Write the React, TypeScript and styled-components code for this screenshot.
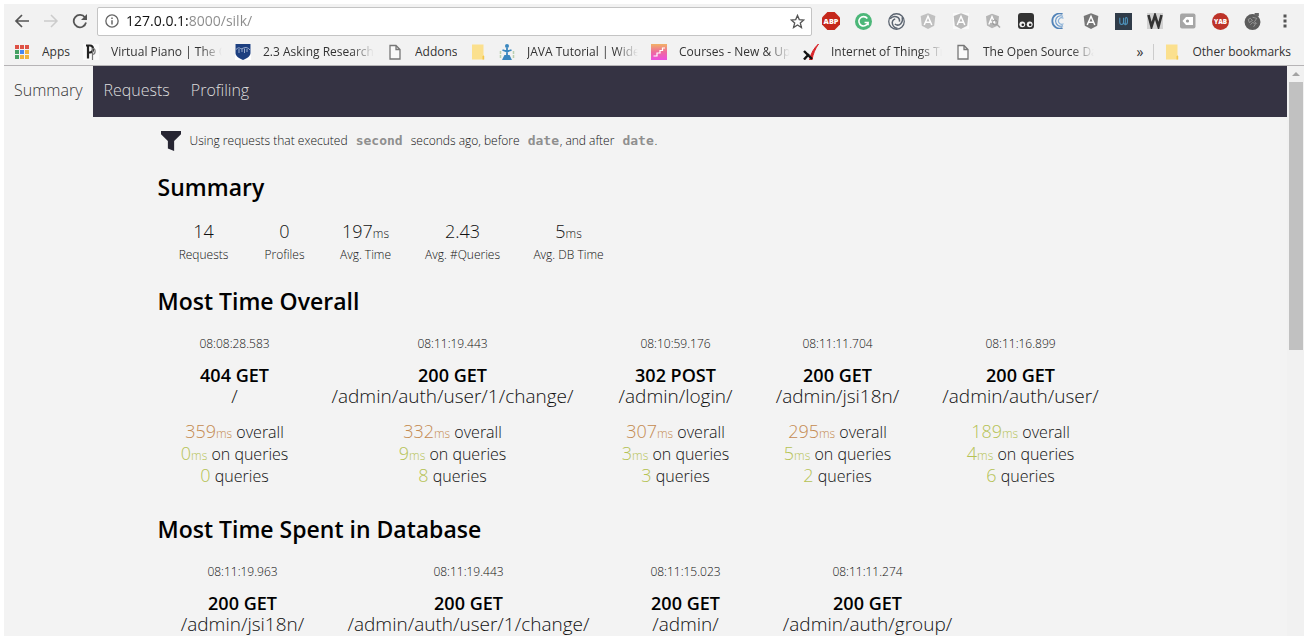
import React from 'react';
import styled, { createGlobalStyle, css } from 'styled-components';

const GlobalStyle = createGlobalStyle`
  * { box-sizing: border-box; }
  body { margin: 0; background: #fff; }
  button, input { font: inherit; color: inherit; }
`;

const uiFont = css`font-family: 'Open Sans', 'Noto Sans', sans-serif;`;

const Frame = styled.div`
  height: 100vh;
  padding: 4px 8px 8px 4px;
  display: flex;
  flex-direction: column;
  background: #fff;
`;

/* Browser chrome */
const Chrome = styled.header`
  ${uiFont}
  background: #f2f2f2;
  border-bottom: 1px solid #b6b4b6;
  color: #333;
`;
const Toolbar = styled.div`
  display: flex;
  align-items: center;
  height: 34px;
  padding: 0 3px 0 4px;
`;
const IconButton = styled.button<{ $w?: number }>`
  width: ${p => (p.$w ? `${p.$w}px` : 'auto')};
  height: 28px;
  flex: none;
  padding: 0;
  border: 0;
  background: none;
  display: flex;
  align-items: center;
  justify-content: center;
`;
const Omnibox = styled.div`
  flex: 1;
  min-width: 0;
  height: 29px;
  margin: 0 3px 0 3px;
  padding: 0 6px 0 7px;
  display: flex;
  align-items: center;
  gap: 7px;
  background: #fff;
  border: 1px solid #c4c4c4;
  border-radius: 2px;
`;
const Address = styled.input`
  flex: 1;
  min-width: 0;
  border: 0;
  padding: 0;
  outline: 0;
  font-size: 14px;
  line-height: 20px;
  color: transparent;
  background: linear-gradient(90deg, #111 62px, #8a8a8a 62px);
  background-clip: text;
  -webkit-background-clip: text;
`;
const Extensions = styled.div`
  flex: 0 0 454px;
  display: grid;
  grid-template-columns: repeat(14, 1fr);
  justify-items: center;
`;
const BookmarksBar = styled.nav`
  display: flex;
  align-items: center;
  height: 27px;
  padding: 0 13px 0 10px;
  gap: 13px;
`;
const Bookmark = styled.a`
  display: flex;
  align-items: center;
  gap: 12px;
  flex: none;
  color: #333;
  text-decoration: none;
  font-size: 12px;
  line-height: 18px;
`;
const BookmarkLabel = styled.span<{ $w: number; $fade?: boolean }>`
  width: ${p => p.$w}px;
  overflow: hidden;
  white-space: nowrap;
  ${p => p.$fade && css`mask-image: linear-gradient(90deg, #000 80%, transparent);`}
`;
const Overflow = styled.div`
  margin-left: auto;
  display: flex;
  align-items: center;
  gap: 10px;
  font-size: 14px;
`;
const Divider = styled.span`
  width: 1px;
  height: 16px;
  background: #ccc;
`;

/* Page */
const Viewport = styled.div`
  flex: 1;
  min-height: 0;
  display: flex;
  background: #f3f3f3;
  font-family: 'Open Sans', 'Noto Sans', sans-serif;
  font-weight: 300;
`;
const Page = styled.div`
  flex: 1;
  min-width: 0;
  overflow: hidden;
  color: #111;
`;
const Menu = styled.nav`
  height: 51px;
  display: flex;
  background: #353343;
`;
const MenuLink = styled.a<{ $active?: boolean }>`
  height: 51px;
  padding: 0 11px 0 10px;
  line-height: 49px;
  font-size: 16px;
  text-decoration: none;
  color: ${p => (p.$active ? '#333' : '#ddd')};
  background: ${p => (p.$active ? '#f3f3f3' : 'transparent')};
`;
const Main = styled.main`
  max-width: 976px;
  margin: 0 auto;
  padding-top: 13px;
`;
const Filter = styled.div`
  display: flex;
  align-items: center;
  height: 22px;
  padding-left: 3px;
  gap: 9px;
  font-size: 12px;
  line-height: 16px;
  white-space: pre;
`;
const FilterField = styled.input<{ $w: number }>`
  width: ${p => p.$w}px;
  margin-left: 5px;
  padding: 0;
  border: 0;
  background: none;
  font-family: 'DejaVu Sans Mono', monospace;
  font-size: 13px;
  font-weight: 700;
  line-height: 16px;
  &::placeholder { color: #8f8f8f; opacity: 1; }
`;
const Section = styled.section`
  margin-bottom: 22px;
`;
const Heading = styled.h2`
  margin: 19px 0;
  font-size: 23px;
  line-height: 32px;
  font-weight: 600;
  color: #000;
`;
const Columns = styled.div<{ $cols: string }>`
  display: grid;
  grid-template-columns: ${p => p.$cols};
  text-align: center;
  white-space: nowrap;
`;
const StatValue = styled.div`
  font-size: 18px;
  line-height: 18px;
`;
const Unit = styled.span`
  font-size: 12px;
  line-height: 12px;
`;
const StatLabel = styled.div`
  margin-top: 7px;
  font-size: 12px;
  line-height: 16px;
`;
const RequestColumn = styled.div`
  padding-bottom: 4px;
`;
const Time = styled.div`
  font-size: 12px;
  line-height: 16px;
  margin-bottom: 12px;
`;
const Status = styled.div`
  font-size: 18px;
  line-height: 22px;
  font-weight: 600;
  color: #000;
`;
const Path = styled.div`
  font-size: 19px;
  line-height: 20px;
  margin-bottom: 15px;
`;
const Metric = styled.div`
  font-size: 16px;
  line-height: 22px;
`;
const Num = styled.span<{ $tone: string }>`
  font-size: 18px;
  line-height: 18px;
  color: ${p => p.$tone};
`;

const Scrollbar = styled.div`
  flex: none;
  width: 17px;
  background: #f1f1f1;
  display: flex;
  flex-direction: column;
  align-items: center;
`;
const ScrollArrow = styled.div`
  height: 16px;
  display: flex;
  align-items: center;
`;
const Thumb = styled.div`
  width: 14px;
  height: 47%;
  background: #c1c1c1;
`;

const Svg = ({ size = 16, children }: { size?: number; children: React.ReactNode }) => (
  <svg width={size} height={size} viewBox="0 0 16 16" fill="none" aria-hidden="true">{children}</svg>
);
const SvgText = ({ fs, fill, y, children }: { fs: number; fill: string; y: number; children: string }) => (
  <text x="8" y={y} fontSize={fs} fill={fill} textAnchor="middle" fontWeight="800" fontFamily="Open Sans, sans-serif">{children}</text>
);
const Shield = ({ fill, letter = '#fff', bg }: { fill: string; letter?: string; bg?: string }) => (
  <Svg>
    {bg && <path d="M0 0h16v16H0z" fill={bg} />}
    <path d="M8 .3 15.300 3 14.200 12.700 8 16 1.800 12.700.7 3z" fill={fill} />
    <path d="M4.200 12 8 3.300l3.800 8.700M5.600 9.300h4.800" stroke={letter} strokeWidth="1.500" />
  </Svg>
);

const extensions: [string, React.ReactNode][] = [
  ['Adblock Plus', <Svg size={18}><path d="M4.800 0h6.400L16 4.800v6.400L11.200 16H4.800L0 11.200V4.800z" fill="#c5281c" /><SvgText fs={6.500} fill="#fff" y={10.400}>ABP</SvgText></Svg>],
  ['Grammarly', <Svg size={17}><circle cx="8" cy="8" r="8" fill="#4cb779" /><path d="M11.600 5.200A4.400 4.400 0 1 0 12.300 9H9M12.300 8.500v3" stroke="#fff" strokeWidth="1.500" /></Svg>],
  ['Spiral', <Svg size={17}><circle cx="8" cy="8" r="7.300" stroke="#5b6470" strokeWidth="1.200" />{[0, 120, 240].map(a => <path key={a} transform={`rotate(${a} 8 8)`} d="M2 5.500C5 1.800 11.500 3 10.800 8.200" stroke="#5b6470" strokeWidth="1.400" />)}</Svg>],
  ['Angular tools', <Shield fill="#c0c0c0" />],
  ['Angular inspector', <Shield fill="#bababa" bg="#fafafa" />],
  ['Angular search', <Svg><path d="M7 .8 14 3.200 13 12.500 7 15.300 2 12.500 1 3.200z" fill="#b5b5b5" /><path d="M3.800 11.500 7 3.500l3 7M5 9h4.500" stroke="#fff" strokeWidth="1.400" /><circle cx="10" cy="9.500" r="2.500" stroke="#999" /><path d="m12 11.500 3 3" stroke="#aaa" strokeWidth="1.600" /></Svg>],
  ['Tampermonkey', <Svg><rect x="0" y="0" width="16" height="16" rx="3" fill="#333" /><circle cx="4.300" cy="11.300" r="2.900" fill="#f2f2f2" /><circle cx="11.700" cy="11.300" r="2.900" fill="#f2f2f2" /><circle cx="4.800" cy="11.700" r="1.300" fill="#222" /><circle cx="12.200" cy="11.700" r="1.300" fill="#222" /></Svg>],
  ['Crescent', <Svg><path d="M12.500 1A7.500 7.500 0 1 0 12.500 15" stroke="#5384b8" strokeWidth="1.800" /><path d="M13 3.300A5.200 5.200 0 1 0 13 12.700" stroke="#6a9acb" strokeWidth="1.200" /><path d="M13.500 5.400A3.200 3.200 0 1 0 13.500 10.600" stroke="#8bb2d8" strokeWidth="1.100" /></Svg>],
  ['Angular', <Shield fill="#777" />],
  ['Udacity', <Svg size={17}><path d="M0 0h16v16H0z" fill="#303c49" /><path d="M4.500 4.500v4c0 3 3.500 3 3.500 0v-4M8 8.500c0 3.200 3.700 3 3.700 0V6c0-2-2-2.200-2-.5v6" stroke="#4e94bd" strokeWidth="1" /></Svg>],
  ['Wikipedia', <Svg><path d="M0 0h16v16H0z" fill="#d2d2d2" /><path d="m1.500 2 3 11.500L8 2.500l3.500 11L14.500 2" stroke="#333" strokeWidth="2.600" /></Svg>],
  ['Tag', <Svg><rect x="0" y=".5" width="15.500" height="15" rx="2" fill="#a6a6a6" /><path d="m2.500 8 3.500-4h7v8H6z" fill="#fff" /><circle cx="7.500" cy="8" r="1.600" fill="#999" /></Svg>],
  ['Yet Another Blocker', <Svg size={17}><circle cx="8" cy="8" r="8" fill="#bd3329" /><SvgText fs={6} fill="#fff" y={10.200}>YAB</SvgText></Svg>],
  ['Globe', <Svg size={17}><circle cx="8" cy="8.500" r="7.500" fill="#5c5c5c" /><path d="M10 0h4v3h-4z" fill="#666" /><path d="m4 6 2-1 2 2-3 2zM8 4l4 1-2 3M6 11l2-2 3 1-2 3M10 8l2 2" stroke="#a8a8a8" strokeWidth=".7" /></Svg>],
];

const FileIcon = () => (
  <Svg><path d="M3 1.500h6l4 4v9.500H3zM9 1.500v4h4" stroke="#777" strokeWidth="1.300" fill="#fafafa" /></Svg>
);
const FolderIcon = () => (
  <Svg><path d="M2 .5h11.500V11l.5.500V15.500H2z" fill="#fbe08e" /><path d="M12.500 15.500v-3l1-1 .7 1v3z" fill="#f3c74e" /></Svg>
);
const dotColors = ['#de5246', '#de5246', '#de5246', '#45a163', '#4688f1', '#efb33c', '#45a163', '#efb33c', '#efb33c'];

const bookmarks: { label?: string; w?: number; fade?: boolean; icon: React.ReactNode }[] = [
  { label: 'Apps', w: 28, icon: <Svg>{dotColors.map((c, i) => <rect key={i} x={1 + (i % 3) * 5} y={1 + Math.floor(i / 3) * 5} width="4" height="4" fill={c} />)}</Svg> },
  { label: 'Virtual Piano | The Online', w: 111, fade: true, icon: <Svg><path d="M0 0h16v16H0z" fill="#fafafa" /><path d="M5 1v13.500M3 1.500h4c4 0 4 7 0 7H5" stroke="#222" strokeWidth="2.200" /><path d="M9.500 4v12M9.500 4.500c3.500-.5 3.500 6 0 6" stroke="#777" strokeWidth="1.200" /></Svg> },
  { label: '2.3 Asking Research Questions', w: 111, fade: true, icon: <Svg><path d="M0 0h16v16H0z" fill="#fff" /><path d="M.5 0h15v9c0 3-3 5-7.500 7C3.500 14 .5 12 .5 9z" fill="#1d3f80" /><path d="M1 5.500c2-2 3-2 4.500-1S9 3 11 3.500s3 1 4 2.500M4 5v4M7 5v3M9.500 4.500V9M12 5v3" stroke="#b9c7df" strokeWidth=".8" /></Svg> },
  { label: 'Addons', w: 42, icon: <FileIcon /> },
  { icon: <FolderIcon /> },
  { label: 'JAVA Tutorial | Widescreen', w: 111, fade: true, icon: <Svg><circle cx="8" cy="2" r="2" fill="#3a87bf" /><path d="M8 4v8M3.500 6 8 7.500 12.500 6M4.500 15 6 12h4l1.500 3z" stroke="#3a87bf" strokeWidth="1.800" fill="#3a87bf" /><path d="M1.500 7v7M14.500 7v7" stroke="#b9cfae" strokeWidth="1.500" strokeDasharray="3 1" /></Svg> },
  { label: 'Courses - New & Upcoming', w: 111, fade: true, icon: <Svg><defs><linearGradient id="steps" x1="0" y1="0" x2="0" y2="1"><stop stopColor="#f2b266" /><stop offset=".5" stopColor="#ee6a9c" /><stop offset="1" stopColor="#ec4fe0" /></linearGradient></defs><path d="M0 0h16v16H0z" fill="url(#steps)" /><path d="M2.500 12H6V9h3V6.500h2.500V4H14" stroke="#fff" strokeWidth="1.200" /></Svg> },
  { label: 'Internet of Things Training', w: 111, fade: true, icon: <Svg><path d="M15.500 0C11 4 8 9 6.500 16H9C10 10 12 5 15.500 0z" fill="#d9252a" stroke="#d9252a" /><path d="m1 7 8 8M1 15.500 6 10" stroke="#111" strokeWidth="2.400" /></Svg> },
  { label: 'The Open Source Data', w: 111, fade: true, icon: <FileIcon /> },
];

const ORANGE = '#c48a50';
const GREEN = '#b5c253';

type Request = { time: string; status: string; path: string; overall?: number; db?: number; queries?: number; slow?: boolean };
const overall: Request[] = [
  { time: '08:08:28.583', status: '404 GET', path: '/', overall: 359, db: 0, queries: 0, slow: true },
  { time: '08:11:19.443', status: '200 GET', path: '/admin/auth/user/1/change/', overall: 332, db: 9, queries: 8, slow: true },
  { time: '08:10:59.176', status: '302 POST', path: '/admin/login/', overall: 307, db: 3, queries: 3, slow: true },
  { time: '08:11:11.704', status: '200 GET', path: '/admin/jsi18n/', overall: 295, db: 5, queries: 2, slow: true },
  { time: '08:11:16.899', status: '200 GET', path: '/admin/auth/user/', overall: 189, db: 4, queries: 6 },
];
const database: Request[] = [
  { time: '08:11:19.963', status: '200 GET', path: '/admin/jsi18n/' },
  { time: '08:11:19.443', status: '200 GET', path: '/admin/auth/user/1/change/' },
  { time: '08:11:15.023', status: '200 GET', path: '/admin/' },
  { time: '08:11:11.274', status: '200 GET', path: '/admin/auth/group/' },
];
const stats = [
  ['14', '', 'Requests'],
  ['0', '', 'Profiles'],
  ['197', 'ms', 'Avg. Time'],
  ['2.43', '', 'Avg. #Queries'],
  ['5', 'ms', 'Avg. DB Time'],
];

const RequestCell = ({ r }: { r: Request }) => (
  <RequestColumn>
    <Time>{r.time}</Time>
    <Status>{r.status}</Status>
    <Path>{r.path}</Path>
    {r.overall !== undefined && (
      <>
        <Metric><Num $tone={r.slow ? ORANGE : GREEN}>{r.overall}<Unit>ms</Unit></Num> overall</Metric>
        <Metric><Num $tone={GREEN}>{r.db}<Unit>ms</Unit></Num> on queries</Metric>
        <Metric><Num $tone={GREEN}>{r.queries}</Num> queries</Metric>
      </>
    )}
  </RequestColumn>
);

export default function App() {
  return (
    <Frame>
      <GlobalStyle />
      <Chrome>
        <Toolbar>
          <IconButton $w={28} aria-label="Back"><Svg><path d="M15 8H2M8 2 2 8l6 6" stroke="#555" strokeWidth="1.700" /></Svg></IconButton>
          <IconButton $w={30} aria-label="Forward"><Svg><path d="M1 8h13M8 2l6 6-6 6" stroke="#ccc" strokeWidth="1.500" /></Svg></IconButton>
          <IconButton $w={28} aria-label="Reload"><Svg><path d="M13 4.500A6.200 6.200 0 1 0 14 9.500" stroke="#555" strokeWidth="1.800" /><path d="M15 1v6H9z" fill="#555" /></Svg></IconButton>
          <Omnibox>
            <Svg size={14}><circle cx="8" cy="8" r="7" stroke="#666" strokeWidth="1.500" /><path d="M8 7v5M8 4v1.700" stroke="#666" strokeWidth="1.700" /></Svg>
            <Address aria-label="Address" defaultValue="127.0.0.1:8000/silk/" />
            <IconButton aria-label="Bookmark this page"><Svg size={15}><path d="m8 1.500 1.900 4.500 4.800.4-3.700 3.200 1.200 4.800L8 11.800l-4.200 2.600L5 9.600 1.300 6.400 6.100 6z" stroke="#555" strokeWidth="1.400" /></Svg></IconButton>
          </Omnibox>
          <Extensions>
            {extensions.map(([name, icon]) => <IconButton key={name} aria-label={name}>{icon}</IconButton>)}
          </Extensions>
          <IconButton $w={32} aria-label="Menu"><Svg><path d="M6.500 1.500h3v3h-3zM6.500 6.500h3v3h-3zM6.500 11.500h3v3h-3z" fill="#555" /></Svg></IconButton>
        </Toolbar>
        <BookmarksBar>
          {bookmarks.map((b, i) => (
            <Bookmark key={i} href="#" aria-label={b.label ?? 'Folder'}>
              {b.icon}
              {b.label && <BookmarkLabel $w={b.w ?? 111} $fade={b.fade}>{b.label}</BookmarkLabel>}
            </Bookmark>
          ))}
          <Overflow>
            <IconButton aria-label="More bookmarks">»</IconButton>
            <Divider />
            <Bookmark href="#"><FolderIcon /><span>Other bookmarks</span></Bookmark>
          </Overflow>
        </BookmarksBar>
      </Chrome>
      <Viewport>
        <Page>
          <Menu>
            <MenuLink href="#" $active>Summary</MenuLink>
            <MenuLink href="#">Requests</MenuLink>
            <MenuLink href="#">Profiling</MenuLink>
          </Menu>
          <Main>
            <Filter>
              <Svg size={20}><path d="M0 0h16v2.500L10.500 8v8L5.500 14V8L0 2.500z" fill="#262532" /></Svg>
              <div>
                Using requests that executed <FilterField $w={52} placeholder="second" aria-label="Seconds" /> seconds ago, before <FilterField $w={32} placeholder="date" aria-label="Before date" />, and after <FilterField $w={32} placeholder="date" aria-label="After date" />.
              </div>
            </Filter>
            <Section>
              <Heading>Summary</Heading>
              <Columns $cols="92px 70px 92px 102px 110px">
                {stats.map(([value, unit, label]) => (
                  <div key={label}>
                    <StatValue>{value}<Unit>{unit}</Unit></StatValue>
                    <StatLabel>{label}</StatLabel>
                  </div>
                ))}
              </Columns>
            </Section>
            <Section>
              <Heading>Most Time Overall</Heading>
              <Columns $cols="154px 282px 164px 160px 206px">
                {overall.map(r => <RequestCell key={r.time} r={r} />)}
              </Columns>
            </Section>
            <Section>
              <Heading>Most Time Spent in Database</Heading>
              <Columns $cols="170px 282px 152px 212px">
                {database.map(r => <RequestCell key={r.time} r={r} />)}
              </Columns>
            </Section>
          </Main>
        </Page>
        <Scrollbar>
          <ScrollArrow><svg width="8" height="4" viewBox="0 0 8 4" aria-hidden="true"><path d="M0 4 4 0l4 4z" fill="#a3a3a3" /></svg></ScrollArrow>
          <Thumb />
        </Scrollbar>
      </Viewport>
    </Frame>
  );
}
